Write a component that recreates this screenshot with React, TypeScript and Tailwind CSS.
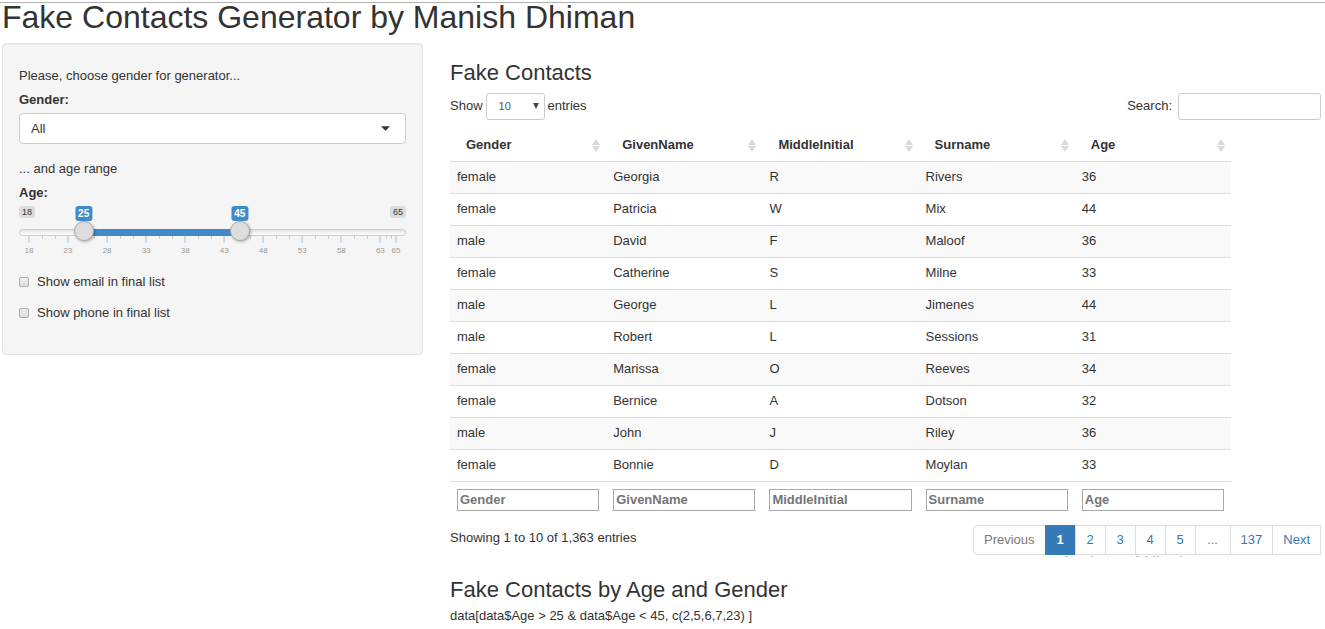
import React, { useState } from "react";

const columns = ["Gender", "GivenName", "MiddleInitial", "Surname", "Age"];

const contacts = [
  ["female", "Georgia", "R", "Rivers", "36"],
  ["female", "Patricia", "W", "Mix", "44"],
  ["male", "David", "F", "Maloof", "36"],
  ["female", "Catherine", "S", "Milne", "33"],
  ["male", "George", "L", "Jimenes", "44"],
  ["male", "Robert", "L", "Sessions", "31"],
  ["female", "Marissa", "O", "Reeves", "34"],
  ["female", "Bernice", "A", "Dotson", "32"],
  ["male", "John", "J", "Riley", "36"],
  ["female", "Bonnie", "D", "Moylan", "33"],
];

const MIN = 18;
const MAX = 65;
const labelled = [18, 23, 28, 33, 38, 43, 48, 53, 58, 63, 65];

const percent = (value: number) => ((value - MIN) / (MAX - MIN)) * 100;

const minorTicks = labelled.slice(0, -1).flatMap((start, i) => {
  const step = (labelled[i + 1] - start) / 3;
  return [start + step, start + 2 * step];
});

const rangeClass =
  "pointer-events-none absolute inset-x-0 top-[15px] m-0 h-5 w-full appearance-none bg-transparent [&::-webkit-slider-thumb]:pointer-events-auto [&::-webkit-slider-thumb]:h-5 [&::-webkit-slider-thumb]:w-5 [&::-webkit-slider-thumb]:cursor-pointer [&::-webkit-slider-thumb]:appearance-none [&::-webkit-slider-thumb]:rounded-full [&::-webkit-slider-thumb]:border [&::-webkit-slider-thumb]:border-[#aaaaaa] [&::-webkit-slider-thumb]:bg-[#dddddd] [&::-webkit-slider-thumb]:shadow-[1px_1px_3px_rgba(0,0,0,0.3)]";

function AgeSlider() {
  const [from, setFrom] = useState(25);
  const [to, setTo] = useState(45);

  return (
    <div className="relative h-[52px]">
      <div className="flex justify-between text-[9px] leading-3 text-[#333333]">
        <span className="rounded-[3px] bg-black/10 px-[3px]">{MIN}</span>
        <span className="rounded-[3px] bg-black/10 px-[3px]">{MAX}</span>
      </div>
      <div className="absolute inset-x-0 top-[23px] h-[7px] rounded-full border border-[#cccccc] bg-linear-to-b from-[#e4e4e4] to-white" />
      <div className="absolute inset-x-[10px] top-[23px] h-[7px]">
        <div
          className="absolute h-full bg-[#428bca]"
          style={{ left: `${percent(from)}%`, right: `${100 - percent(to)}%` }}
        />
      </div>
      <div className="absolute inset-x-[10px] top-[30px] text-[8px] leading-[10px] text-[#999999]">
        {minorTicks.map((tick) => (
          <span
            key={tick}
            className="absolute h-[3px] w-px bg-[#cccccc]"
            style={{ left: `${percent(tick)}%` }}
          />
        ))}
        {labelled.map((tick) => (
          <span
            key={tick}
            className="absolute flex -translate-x-1/2 flex-col items-center gap-[3px]"
            style={{ left: `${percent(tick)}%` }}
          >
            <span className="h-[7px] w-px bg-[#9fc4e4]" />
            {tick}
          </span>
        ))}
      </div>
      <input
        type="range"
        aria-label="Minimum age"
        min={MIN}
        max={MAX}
        value={from}
        onChange={(e) => setFrom(Math.min(Number(e.target.value), to))}
        className={rangeClass}
      />
      <input
        type="range"
        aria-label="Maximum age"
        min={MIN}
        max={MAX}
        value={to}
        onChange={(e) => setTo(Math.max(Number(e.target.value), from))}
        className={rangeClass}
      />
      <div className="absolute inset-x-[10px] top-0 text-[10px] font-bold leading-[15px] text-white">
        {[from, to].map((value, i) => (
          <span
            key={i}
            className="absolute -translate-x-1/2 rounded-[3px] bg-[#428bca] px-[3px]"
            style={{ left: `${percent(value)}%` }}
          >
            {value}
          </span>
        ))}
      </div>
    </div>
  );
}

function Tick({ label }: { label: string }) {
  return (
    <label className="flex items-center gap-2">
      <input
        type="checkbox"
        className="h-[10px] w-[10px] appearance-none rounded-[2px] border border-[#adadad] bg-linear-to-b from-[#eeeeee] to-[#dcdcdc] checked:bg-[#428bca]"
      />
      {label}
    </label>
  );
}

function SortIcon() {
  return (
    <svg width="8" height="13" viewBox="0 0 8 13" fill="#dadada" aria-hidden="true">
      <path d="M4 0 8 6H0ZM0 7H8L4 13Z" />
    </svg>
  );
}

const pageClass =
  "-ml-px h-[30px] min-w-[31px] border border-[#dddddd] bg-white px-[10px] text-[#337ab7] first:ml-0 first:rounded-l last:rounded-r disabled:min-w-9 disabled:text-[#777777]";

export default function App() {
  return (
    <div className="bg-white pl-[2px] pr-1 pt-[2px] font-['Liberation_Sans',Arial,sans-serif] text-[13px] leading-[18px] text-[#333333]">
      <div className="-ml-[2px] -mr-1 h-px bg-[#b3b3b3]" />
      <h1 className="mb-[12px] text-[32px] leading-[28px]">
        Fake Contacts Generator by Manish Dhiman
      </h1>
      <div className="grid grid-cols-[421fr_871fr] items-start gap-x-[27px]">
        <form
          className="rounded border border-[#e3e3e3] bg-[#f5f5f5] px-4 pb-8 pt-[23px] shadow-[inset_0_1px_1px_rgba(0,0,0,0.05)]"
          onSubmit={(e) => e.preventDefault()}
        >
          <p>Please, choose gender for generator...</p>
          <label htmlFor="gender" className="mt-[6px] block font-bold">
            Gender:
          </label>
          <div className="relative mt-[4px]">
            <select
              id="gender"
              className="block h-[31px] w-full appearance-none rounded border border-[#cccccc] bg-white px-[11px]"
            >
              <option>All</option>
              <option>female</option>
              <option>male</option>
            </select>
            <svg
              className="pointer-events-none absolute right-4 top-[13px]"
              width="9"
              height="5"
              viewBox="0 0 10 5"
              fill="#333333"
              aria-hidden="true"
            >
              <path d="M0 0H10L5 5Z" />
            </svg>
          </div>
          <p className="mt-4">... and age range</p>
          <p className="mb-[4px] mt-[6px] font-bold">Age:</p>
          <AgeSlider />
          <div className="mt-[15px] flex flex-col items-start gap-[13px]">
            <Tick label="Show email in final list" />
            <Tick label="Show phone in final list" />
          </div>
        </form>

        <main className="pt-[17px]">
          <h2 className="text-[22px] leading-[26px]">Fake Contacts</h2>
          <div className="mt-[7px] flex items-start justify-between leading-[25px]">
            <label className="flex items-start gap-[3px]">
              Show
              <span className="relative">
                <select className="block h-[27px] w-[59px] appearance-none rounded-[3px] border border-[#cccccc] bg-white px-[12px] text-[11px] text-[#555555]">
                  <option>10</option>
                  <option>25</option>
                  <option>50</option>
                </select>
                <svg
                  className="pointer-events-none absolute right-[6px] top-[10px]"
                  width="6"
                  height="6"
                  viewBox="0 0 6 6"
                  fill="#444444"
                  aria-hidden="true"
                >
                  <path d="M0 0H6L3 6Z" />
                </svg>
              </span>
              entries
            </label>
            <label className="flex items-start gap-[6px]">
              Search:
              <input
                type="search"
                className="h-[27px] w-[143px] rounded-[3px] border border-[#cccccc] bg-white px-2"
              />
            </label>
          </div>

          <table className="mt-[8px] w-[calc(100%-90px)] table-fixed border-collapse text-left">
            <thead>
              <tr className="h-[33px] border-b border-[#dddddd]">
                {columns.map((name) => (
                  <th key={name} className="pl-4 pr-[6px] pt-[2px]">
                    <span className="flex items-center justify-between">
                      {name}
                      <SortIcon />
                    </span>
                  </th>
                ))}
              </tr>
            </thead>
            <tbody>
              {contacts.map((row) => (
                <tr key={row[1]} className="h-8 border-b border-[#dddddd] odd:bg-[#f9f9f9]">
                  {row.map((cell, i) => (
                    <td key={i} className="px-[7px]">
                      {cell}
                    </td>
                  ))}
                </tr>
              ))}
            </tbody>
            <tfoot>
              <tr>
                {columns.map((name) => (
                  <td key={name} className="px-[7px] pt-[7px]">
                    <input
                      type="text"
                      aria-label={name}
                      placeholder={name}
                      className="block h-[22px] w-full border border-[#a9a9a9] bg-white px-[2px] font-bold placeholder:text-[#757575]"
                    />
                  </td>
                ))}
              </tr>
            </tfoot>
          </table>

          <div className="mt-[14px] flex items-start justify-between">
            <p className="pt-[4px]">Showing 1 to 10 of 1,363 entries</p>
            <nav aria-label="Pages" className="relative flex">
              <button type="button" disabled className={pageClass}>
                Previous
              </button>
              <button
                type="button"
                aria-current="page"
                className="-ml-px h-[30px] min-w-[31px] border border-[#337ab7] bg-[#337ab7] px-[10px] font-bold text-white"
              >
                1
              </button>
              {["2", "3", "4", "5"].map((page) => (
                <button key={page} type="button" className={pageClass}>
                  {page}
                </button>
              ))}
              <button type="button" disabled className={pageClass}>
                ...
              </button>
              <button type="button" className={pageClass}>
                137
              </button>
              <button type="button" className={pageClass}>
                Next
              </button>
              <svg
                className="pointer-events-none absolute right-[139px] top-[31px]"
                width="118"
                height="1"
                viewBox="0 0 118 1"
                fill="#c4c4c4"
                aria-hidden="true"
              >
                <path d="M1 0h3v1H1zM27 0h2v1h-2zM72 0h3v1h-3zM81 0h3v1h-3zM89 0h3v1h-3zM93 0h2v1h-2zM116 0h2v1h-2z" />
              </svg>
            </nav>
          </div>

          <h2 className="mt-[22px] text-[22px] leading-[26px]">Fake Contacts by Age and Gender</h2>
          <p className="mt-[4px]">{"data[data$Age > 25 & data$Age < 45, c(2,5,6,7,23) ]"}</p>
        </main>
      </div>
    </div>
  );
}
